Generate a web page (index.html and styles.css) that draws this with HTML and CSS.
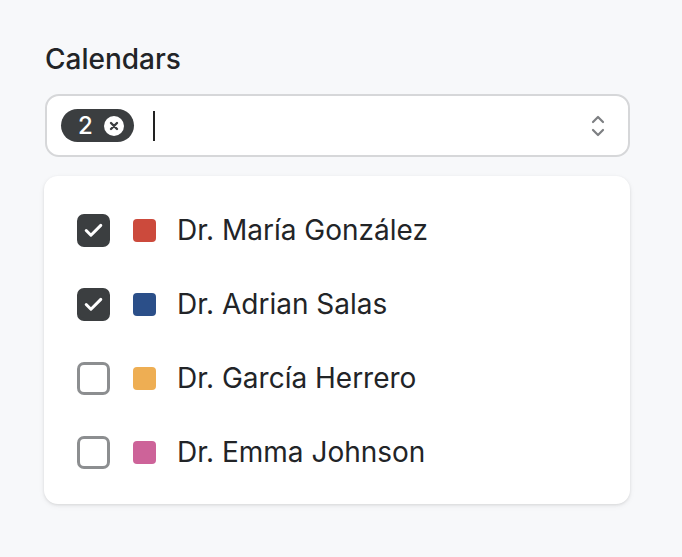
FILE: index.html
```html
<!DOCTYPE html>
<html>
<head>
<meta charset="utf-8">
<link rel="stylesheet" href="styles.css">
</head>
<body>
<div class="field">
  <div class="label">Calendars</div>
  <div class="control">
    <span class="chip">2<span class="chip-x"><svg viewBox="0 0 20 20" width="20" height="20"><circle cx="10" cy="10" r="10" fill="#fff"/><path d="M7 7l6 6M13 7l-6 6" stroke="#3b3e40" stroke-width="2.4" stroke-linecap="round"/></svg></span></span>
    <span class="cursor"></span>
    <svg class="chev" viewBox="0 0 16 26" width="16" height="26"><path d="M3 9l5-5 5 5M3 17l5 5 5-5" fill="none" stroke="#7d7f82" stroke-width="2.2" stroke-linecap="round" stroke-linejoin="round"/></svg>
  </div>
  <div class="menu">
    <div class="item"><span class="box on"><svg viewBox="0 0 20 20" width="28" height="28"><path d="M4.6 10.4l3.5 3.5L15.4 6.6" fill="none" stroke="#fff" stroke-width="2.2" stroke-linecap="round" stroke-linejoin="round"/></svg></span><span class="swatch red"></span><span class="name">Dr. María González</span></div>
    <div class="item"><span class="box on"><svg viewBox="0 0 20 20" width="28" height="28"><path d="M4.6 10.4l3.5 3.5L15.4 6.6" fill="none" stroke="#fff" stroke-width="2.2" stroke-linecap="round" stroke-linejoin="round"/></svg></span><span class="swatch blue"></span><span class="name">Dr. Adrian Salas</span></div>
    <div class="item"><span class="box"></span><span class="swatch orange"></span><span class="name">Dr. García Herrero</span></div>
    <div class="item"><span class="box"></span><span class="swatch pink"></span><span class="name">Dr. Emma Johnson</span></div>
  </div>
</div>
</body>
</html>
```
FILE: styles.css
```css
html, body { margin: 0; padding: 0; }
body {
  background: #f7f8fa;
  font-family: Inter, "Noto Sans", sans-serif;
  color: #222427;
  width: 682px;
  height: 557px;
  overflow: hidden;
}
.field {
  padding: 42px 52px 0 44px;
  display: flex;
  flex-direction: column;
}
.label {
  font-size: 28px;
  font-weight: 500;
  line-height: 34px;
  margin-left: 1px;
  color: #222427;
}
.control {
  margin: 18px 0 0 1px;
  height: 59px;
  border: 2px solid #d6d7d9;
  border-radius: 14px;
  background: #fff;
  display: flex;
  align-items: center;
  padding: 0 22px 0 14px;
}
.chip {
  display: inline-flex;
  align-items: center;
  height: 33px;
  background: #3b3e40;
  color: #fff;
  border-radius: 17px;
  padding: 0 10px 0 17px;
  font-size: 24px;
  font-weight: 500;
  gap: 11px;
}
.chip-x { display: flex; }
.cursor {
  width: 2px;
  height: 30px;
  background: #222;
  margin-left: 19px;
}
.chev { margin-left: auto; }
.menu {
  margin-top: 19px;
  background: #fff;
  border-radius: 14px;
  box-shadow: 0 1px 3px rgba(0,0,0,0.1), 0 2px 6px rgba(0,0,0,0.05);
  padding: 17px 0 15px 33px;
  display: flex;
  flex-direction: column;
}
.item {
  height: 74px;
  display: flex;
  align-items: center;
}
.box {
  width: 33px;
  height: 33px;
  box-sizing: border-box;
  border: 3px solid #8c8e90;
  border-radius: 7px;
  display: flex;
  align-items: center;
  justify-content: center;
}
.box.on { background: #3b3e40; border-color: #3b3e40; }
.swatch {
  width: 23px;
  height: 23px;
  border-radius: 4px;
  margin-left: 23px;
}
.red { background: #cc4a3c; }
.blue { background: #2b4f89; }
.orange { background: #eeae53; }
.pink { background: #cd6399; }
.name {
  margin-left: 21px;
  font-size: 28px;
  line-height: 34px;
}
```
